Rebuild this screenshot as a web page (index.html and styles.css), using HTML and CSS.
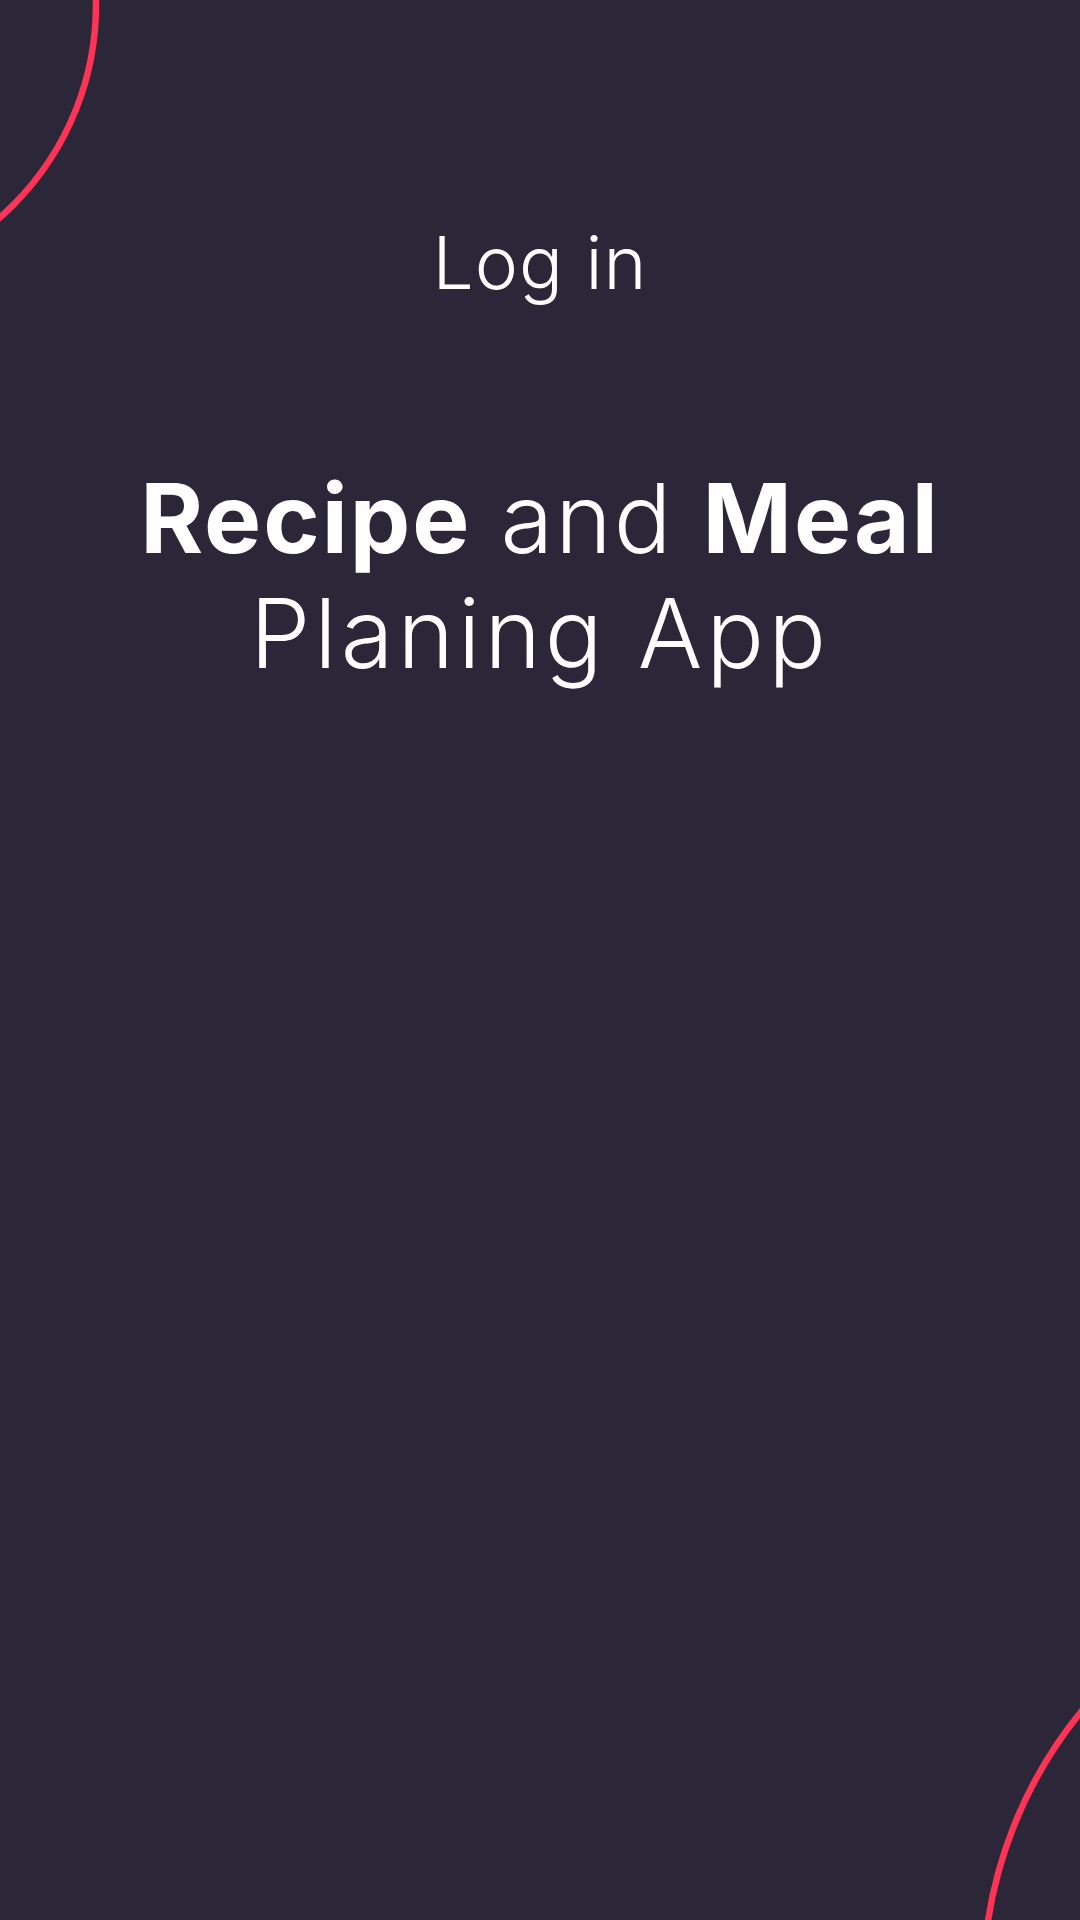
FILE: index.html
```html
<!DOCTYPE html>
<html lang="en">
<head>
<meta charset="utf-8">
<title>Log in</title>
<link rel="stylesheet" href="styles.css">
</head>
<body>
<div class="screen">
  <svg class="decor" width="1080" height="1920" viewBox="0 0 1080 1920" aria-hidden="true">
    <circle cx="-187" cy="5" r="283" fill="none" stroke="#FF3355" stroke-width="6.5"/>
    <circle cx="1418" cy="1987" r="435" fill="none" stroke="#FF3355" stroke-width="6.5"/>
  </svg>
  <main class="content">
    <h1 class="title">Log in</h1>
    <h2 class="headline">
      <span class="line line-top"><b>Recipe</b> and <b>Meal</b></span>
      <span class="line line-bottom">Planing App</span>
    </h2>
  </main>
</div>
</body>
</html>
```

FILE: styles.css
```css
* { box-sizing: border-box; }
html, body {
  margin: 0;
  padding: 0;
  background: #2B2738;
}
.screen {
  position: relative;
  width: 1080px;
  height: 1920px;
  overflow: hidden;
  background: #2B2738;
  color: #ffffff;
  font-family: Inter, "Open Sans", "DejaVu Sans", sans-serif;
}
.decor {
  position: absolute;
  left: 0;
  top: 0;
  pointer-events: none;
}
.content {
  position: relative;
  display: flex;
  flex-direction: column;
  align-items: center;
  padding-top: 219px;
}
.title {
  margin: 0;
  font-size: 73px;
  line-height: 88px;
  font-weight: 300;
  letter-spacing: 1px;
}
.headline {
  margin: 154px 0 0;
  display: flex;
  flex-direction: column;
  align-items: center;
  font-size: 96px;
  line-height: 115px;
  font-weight: 300;
}
.headline b {
  font-weight: 700;
}
.line {
  display: block;
  white-space: nowrap;
}
.line-top {
  letter-spacing: 2px;
}
.line-bottom {
  letter-spacing: 4px;
}
```
